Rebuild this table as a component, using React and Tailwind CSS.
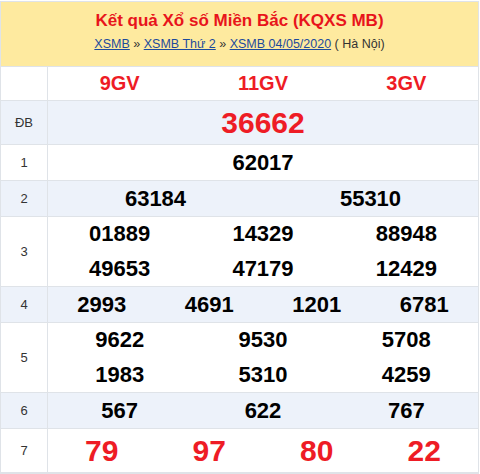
import React from "react";

const font = { fontFamily: '"Liberation Sans", Arial, sans-serif' };

function Label({ children }) {
  return (
    <div className="w-[47px] shrink-0 border-r border-[#dfe3e8] flex items-center justify-center text-[13px] text-[#333]">
      {children}
    </div>
  );
}

function Row({ label, bg, h, children }) {
  return (
    <div className={`flex border-b border-[#dfe3e8] ${bg}`} style={{ height: h }}>
      <Label>{label}</Label>
      <div className="flex-1 flex flex-col justify-center">{children}</div>
    </div>
  );
}

function Nums({ items, cls = "text-[22px] text-black", lh = "leading-[35px]" }) {
  return (
    <div className={`grid ${lh}`} style={{ gridTemplateColumns: `repeat(${items.length}, minmax(0,1fr))` }}>
      {items.map((n, i) => (
        <div key={i} className={`text-center font-bold ${cls}`}>{n}</div>
      ))}
    </div>
  );
}

export default function App() {
  return (
    <div className="w-[480px] h-[474px] bg-white pt-px" style={font}>
      <div className="w-[479px] border border-[#dfe3e8]">
        <div className="h-[65px] bg-[#feea9f] border-b border-[#dfe3e8] flex flex-col items-center pt-[8px]">
          <div className="text-[17px] leading-[22px] font-bold text-[#e8141b]">
            Kết quả Xổ số Miền Bắc (KQXS MB)
          </div>
          <div className="mt-[3px] text-[12.5px] leading-[18px] text-[#333]">
            <span className="text-[#1d4a9c] underline">XSMB</span>
            <span> » </span>
            <span className="text-[#1d4a9c] underline">XSMB Thứ 2</span>
            <span> » </span>
            <span className="text-[#1d4a9c] underline">XSMB 04/05/2020</span>
            <span> ( Hà Nội)</span>
          </div>
        </div>
        <Row label="" bg="bg-white" h={34}>
          <Nums items={["9GV", "11GV", "3GV"]} cls="text-[20px] text-[#ee1c25]" lh="leading-[33px]" />
        </Row>
        <Row label="ĐB" bg="bg-[#edf2fa]" h={44}>
          <Nums items={["36662"]} cls="text-[30px] text-[#ee1c25]" lh="leading-[43px]" />
        </Row>
        <Row label="1" bg="bg-white" h={36}>
          <Nums items={["62017"]} />
        </Row>
        <Row label="2" bg="bg-[#edf2fa]" h={36}>
          <Nums items={["63184", "55310"]} />
        </Row>
        <Row label="3" bg="bg-white" h={70}>
          <Nums items={["01889", "14329", "88948"]} lh="leading-[34px]" />
          <Nums items={["49653", "47179", "12429"]} lh="leading-[35px]" />
        </Row>
        <Row label="4" bg="bg-[#edf2fa]" h={36}>
          <Nums items={["2993", "4691", "1201", "6781"]} />
        </Row>
        <Row label="5" bg="bg-white" h={70}>
          <Nums items={["9622", "9530", "5708"]} lh="leading-[34px]" />
          <Nums items={["1983", "5310", "4259"]} lh="leading-[35px]" />
        </Row>
        <Row label="6" bg="bg-[#edf2fa]" h={36}>
          <Nums items={["567", "622", "767"]} />
        </Row>
        <Row label="7" bg="bg-white" h={44}>
          <Nums items={["79", "97", "80", "22"]} cls="text-[30px] text-[#ee1c25]" lh="leading-[43px]" />
        </Row>
      </div>
    </div>
  );
}
